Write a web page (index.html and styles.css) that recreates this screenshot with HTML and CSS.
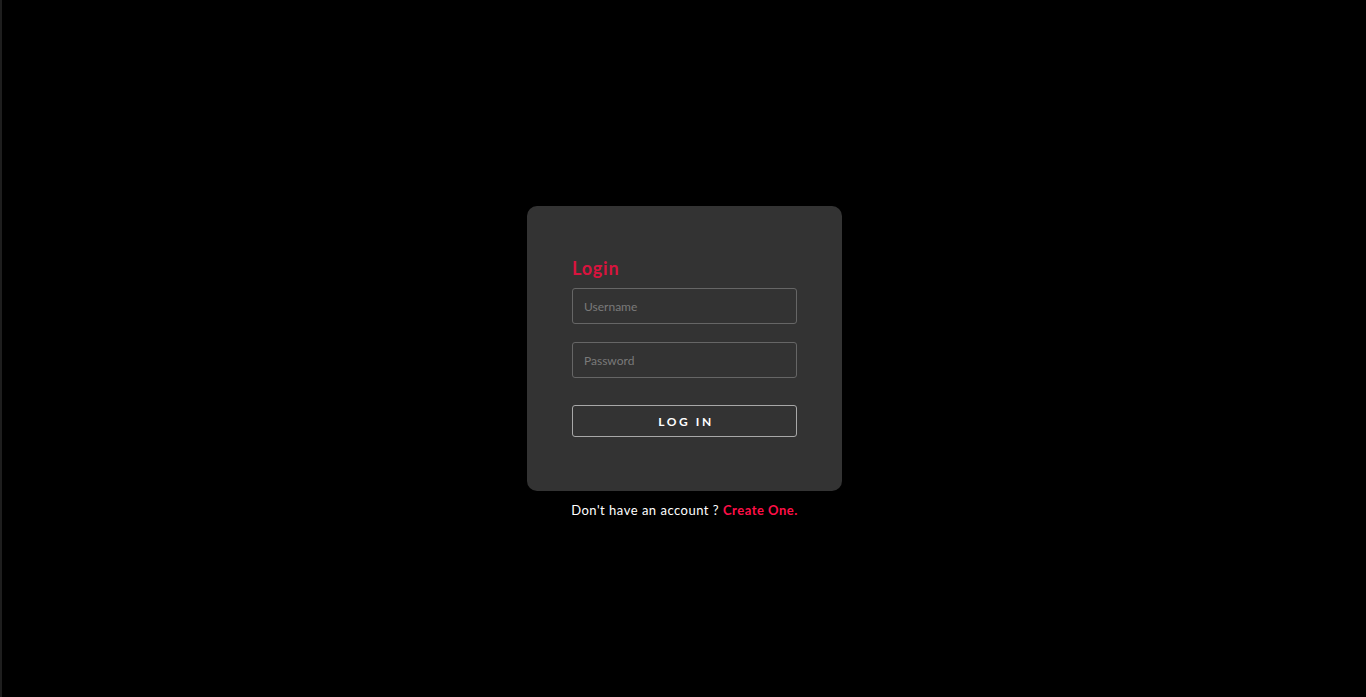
FILE: index.html
```html
<!DOCTYPE html>
<html>
<head>
<meta charset="utf-8">
<link rel="stylesheet" href="styles.css">
</head>
<body>
<main class="page">
  <div class="wrap">
    <form class="card">
      <h1 class="title">Login</h1>
      <input class="field" type="text" placeholder="Username">
      <input class="field" type="password" placeholder="Password">
      <button class="btn" type="button">LOG IN</button>
    </form>
    <p class="foot">Don't have an account ? <a class="link" href="#">Create One.</a></p>
  </div>
</main>
</body>
</html>
```
FILE: styles.css
```css
* { box-sizing: border-box; }
html, body { margin: 0; padding: 0; height: 100%; }
body {
  background: #000;
  font-family: "Lato", "Liberation Sans", sans-serif;
  border-left: 2px solid #1e1e1e;
}
.page {
  height: 100%;
  display: flex;
  justify-content: center;
  padding-top: 206px;
}
.wrap {
  width: 315px;
  display: flex;
  flex-direction: column;
  align-items: center;
  margin-left: 1px;
}
.card {
  width: 315px;
  height: 285px;
  background: #333;
  border-radius: 10px;
  padding: 51px 45px 0 45px;
  display: flex;
  flex-direction: column;
}
.title {
  margin: 0 0 8px 0;
  font-size: 18px;
  line-height: 23px;
  font-weight: 700;
  letter-spacing: 0.8px;
  color: #d8143e;
}
.field {
  width: 225px;
  height: 36px;
  background: transparent;
  border: 1px solid #666;
  border-radius: 3px;
  padding: 0 11px;
  font-family: inherit;
  font-size: 12px;
  color: #ddd;
  outline: none;
  margin-bottom: 18px;
}
.field::placeholder { color: #7a7a7a; }
.btn {
  margin-top: 9px;
  width: 225px;
  height: 32px;
  background: transparent;
  border: 1px solid #a8a8a8;
  border-radius: 3px;
  color: #fff;
  font-family: inherit;
  font-size: 12px;
  font-weight: 700;
  letter-spacing: 2.6px;
  padding: 0 0 0 3px;
}
.foot {
  margin: 11px 0 0 0;
  font-size: 13px;
  line-height: 16px;
  letter-spacing: 0.5px;
  color: #fff;
}
.link {
  color: #ff0f47;
  font-weight: 700;
  text-decoration: none;
}
```
